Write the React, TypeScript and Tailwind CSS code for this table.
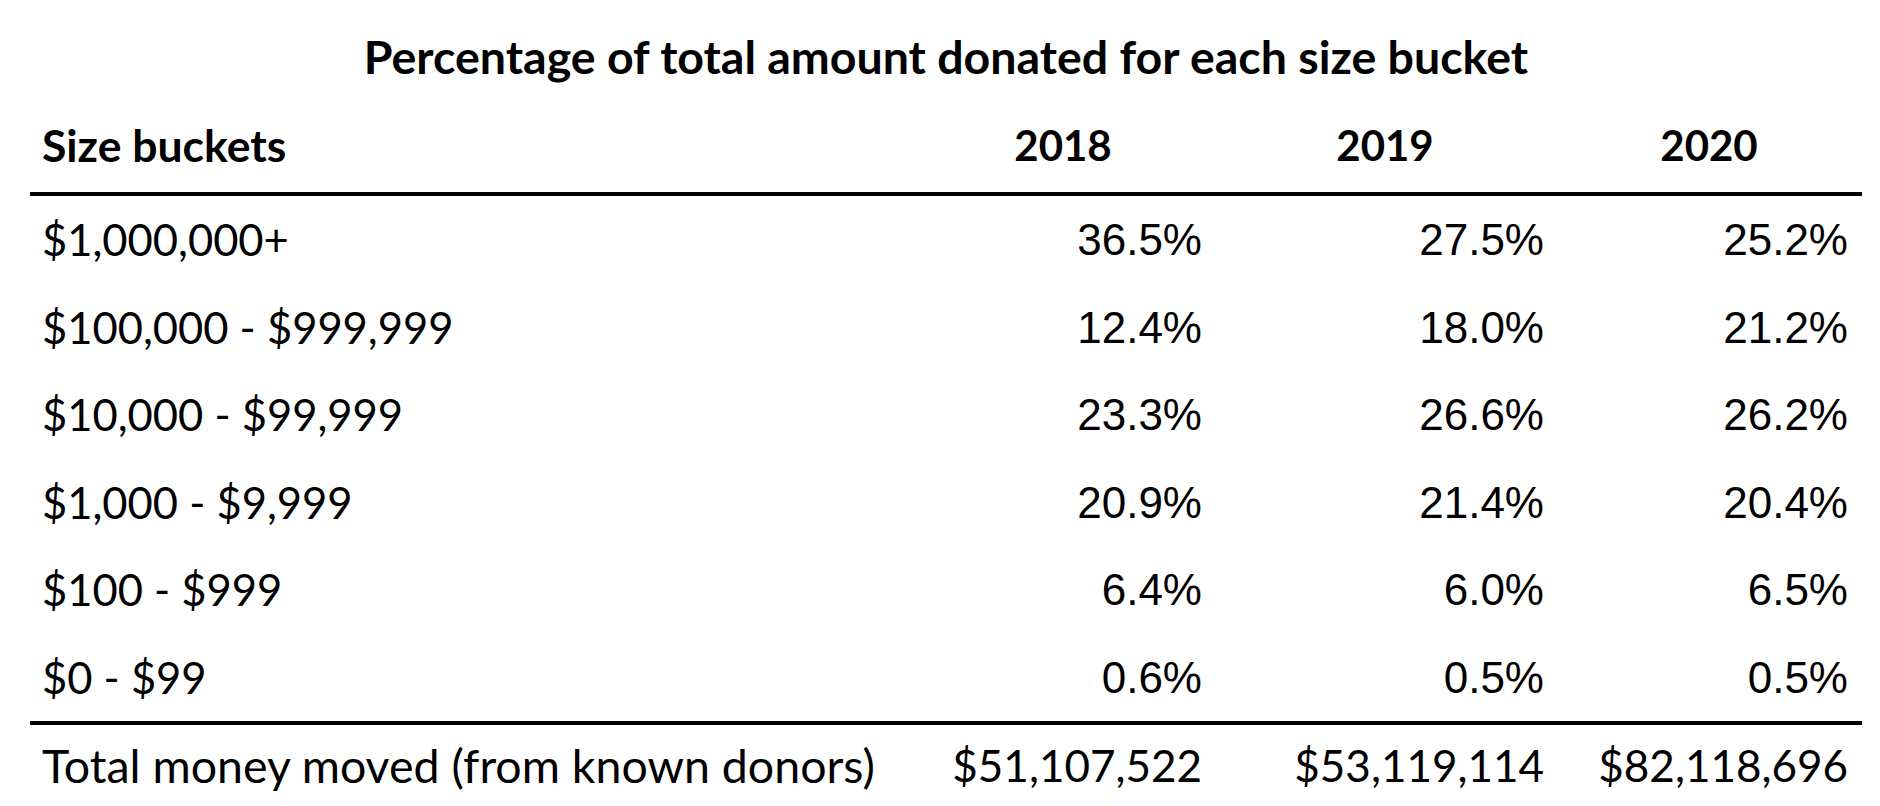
import React from "react";

interface Row {
  label: string;
  values: string[];
}

const years = ["2018", "2019", "2020"];

const rows: Row[] = [
  { label: "$1,000,000+", values: ["36.5%", "27.5%", "25.2%"] },
  { label: "$100,000 - $999,999", values: ["12.4%", "18.0%", "21.2%"] },
  { label: "$10,000 - $99,999", values: ["23.3%", "26.6%", "26.2%"] },
  { label: "$1,000 - $9,999", values: ["20.9%", "21.4%", "20.4%"] },
  { label: "$100 - $999", values: ["6.4%", "6.0%", "6.5%"] },
  { label: "$0 - $99", values: ["0.6%", "0.5%", "0.5%"] },
];

const totals = ["$51,107,522", "$53,119,114", "$82,118,696"];

const cols = "grid grid-cols-[882px_302px_342px_306px]";
const calibri = "font-['Lato',sans-serif]";
const arial = "font-['Liberation_Sans',Arial,sans-serif]";

export default function App() {
  return (
    <div className="w-[1880px] h-[806px] bg-white text-black overflow-hidden pt-[31px] pl-[30px]">
      <div className="w-[1832px]">
        <h1 className={`${calibri} text-center font-bold text-[46.5px] leading-[50px]`}>
          Percentage of total amount donated for each size bucket
        </h1>

        <div className={`${cols} ${calibri} font-bold text-[42px] leading-[50px] pt-[39px] pb-[22px] border-b-4 border-black`}>
          <div className="pl-[12px] text-[44.5px]">Size buckets</div>
          {years.map(y => (
            <div key={y} className="text-center">{y}</div>
          ))}
        </div>

        {rows.map(r => (
          <div key={r.label} className={`${cols} h-[87.5px] leading-[87.5px]`}>
            <div className={`${calibri} text-[43.5px] pl-[12px]`}>{r.label}</div>
            <div className={`${arial} text-[44px] text-right pr-[12px]`}>{r.values[0]}</div>
            <div className={`${arial} text-[44px] text-right pr-[12px]`}>{r.values[1]}</div>
            <div className={`${arial} text-[44px] text-right pr-[14px]`}>{r.values[2]}</div>
          </div>
        ))}

        <div className={`${cols} ${calibri} text-[44px] leading-[80px] border-t-4 border-black`}>
          <div className="pl-[12px] text-[46.5px]">Total money moved (from known donors)</div>
          <div className="text-right pr-[12px]">{totals[0]}</div>
          <div className="text-right pr-[12px]">{totals[1]}</div>
          <div className="text-right pr-[14px]">{totals[2]}</div>
        </div>
      </div>
    </div>
  );
}
